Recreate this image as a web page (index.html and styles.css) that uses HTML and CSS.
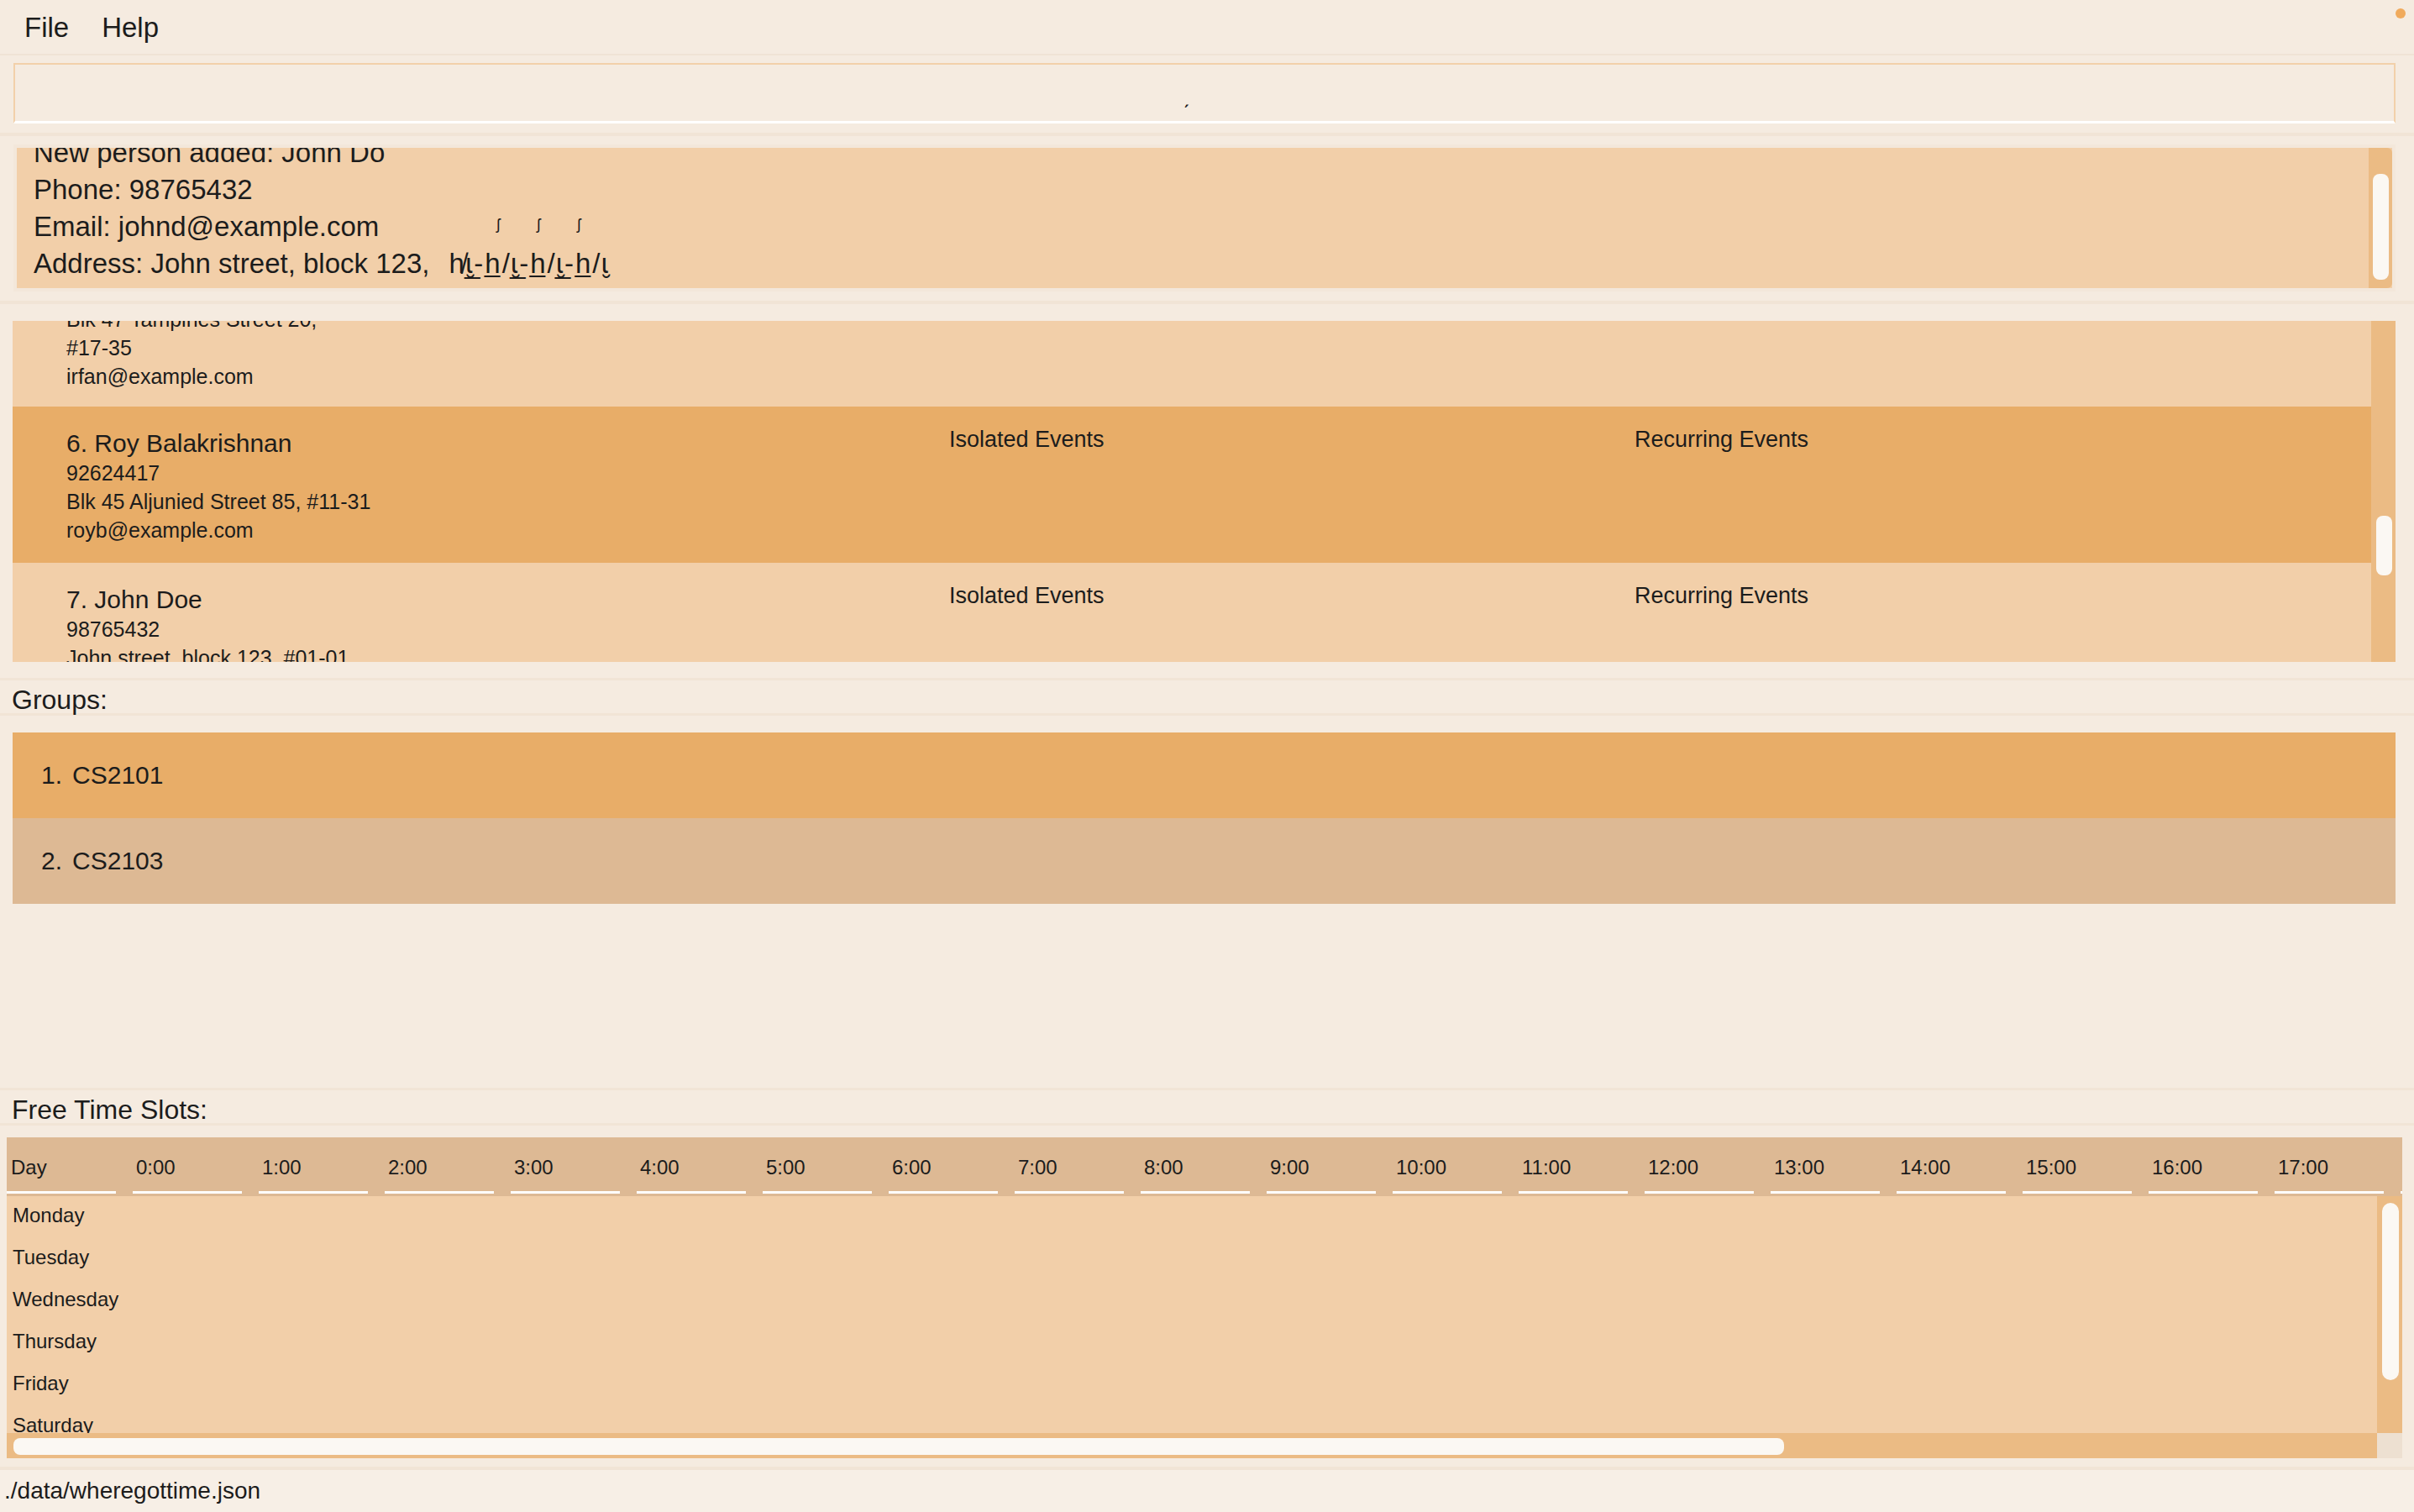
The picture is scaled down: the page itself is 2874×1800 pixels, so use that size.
FILE: index.html
```html
<!DOCTYPE html>
<html lang="en">
<head>
<meta charset="utf-8">
<title>WhereGotTime</title>
<link rel="stylesheet" href="styles.css">
</head>
<body>
<div class="app">
  <header class="menubar">
    <span class="menu-item">File</span>
    <span class="menu-item">Help</span>
    <span class="dot"></span>
  </header>

  <section class="command-pane">
    <div class="command-box"><span class="caret">ˏ</span></div>
  </section>

  <section class="result-pane">
    <div class="result-box">
      <div class="result-text">
        <div>New person added: John Do</div>
        <div>Phone: 98765432</div>
        <div>Email: johnd@example.com<span class="mark m1">ʃ</span><span class="mark m2">ʃ</span><span class="mark m3">ʃ</span></div>
        <div>Address: John street, block 123, <span class="garble">h̸ɩ̮̲-h̲/ɩ̮̲-h̲/ɩ̮̲-h̲/ɩ̮</span></div>
      </div>
      <div class="vscroll result-scroll"><div class="thumb"></div></div>
    </div>
  </section>

  <section class="person-pane">
    <div class="person-list">
      <div class="person-rows">
        <div class="person-scroll">
          <div class="person-row wrapped">
            <div class="person-info">
              <div class="name">5. Irfan Ibrahim</div>
              <div class="detail">92492021</div>
              <div class="detail">Blk 47 Tampines Street 20, <span class="unit">#17-35</span></div>
              <div class="detail">irfan@example.com</div>
            </div>
            <div class="events">Isolated Events</div>
            <div class="events">Recurring Events</div>
          </div>
          <div class="person-row selected">
            <div class="person-info">
              <div class="name">6. Roy Balakrishnan</div>
              <div class="detail">92624417</div>
              <div class="detail">Blk 45 Aljunied Street 85, <span class="unit">#11-31</span></div>
              <div class="detail">royb@example.com</div>
            </div>
            <div class="events">Isolated Events</div>
            <div class="events">Recurring Events</div>
          </div>
          <div class="person-row">
            <div class="person-info">
              <div class="name">7. John Doe</div>
              <div class="detail">98765432</div>
              <div class="detail">John street, block 123, <span class="unit">#01-01</span></div>
              <div class="detail">johnd@example.com</div>
            </div>
            <div class="events">Isolated Events</div>
            <div class="events">Recurring Events</div>
          </div>
        </div>
      </div>
      <div class="vscroll list-scroll"><div class="thumb"></div></div>
    </div>
  </section>

  <div class="label-bar">Groups:</div>

  <section class="group-pane">
    <div class="group-row selected"><span class="idx">1.</span><span>CS2101</span></div>
    <div class="group-row alt"><span class="idx">2.</span><span>CS2103</span></div>
  </section>

  <div class="label-bar">Free Time Slots:</div>

  <section class="table-pane">
    <div class="table">
      <div class="thead">
        <div class="th th-day">Day</div>
        <div class="th">0:00</div>
        <div class="th">1:00</div>
        <div class="th">2:00</div>
        <div class="th">3:00</div>
        <div class="th">4:00</div>
        <div class="th">5:00</div>
        <div class="th">6:00</div>
        <div class="th">7:00</div>
        <div class="th">8:00</div>
        <div class="th">9:00</div>
        <div class="th">10:00</div>
        <div class="th">11:00</div>
        <div class="th">12:00</div>
        <div class="th">13:00</div>
        <div class="th">14:00</div>
        <div class="th">15:00</div>
        <div class="th">16:00</div>
        <div class="th">17:00</div>
        <div class="th">18:00</div>
        <div class="th">19:00</div>
        <div class="th">20:00</div>
        <div class="th">21:00</div>
        <div class="th">22:00</div>
        <div class="th">23:00</div>
      </div>
      <div class="tbody-wrap">
        <div class="tbody">
          <div class="tr">Monday</div>
          <div class="tr">Tuesday</div>
          <div class="tr">Wednesday</div>
          <div class="tr">Thursday</div>
          <div class="tr">Friday</div>
          <div class="tr">Saturday</div>
          <div class="tr">Sunday</div>
        </div>
        <div class="vscroll table-scroll"><div class="thumb"></div></div>
      </div>
      <div class="hscroll-row">
        <div class="hscroll"><div class="hthumb"></div></div>
        <div class="corner"></div>
      </div>
    </div>
  </section>

  <footer class="status">./data/wheregottime.json</footer>
</div>
</body>
</html>
```

FILE: styles.css
```css
* { box-sizing: border-box; }

body {
  margin: 0;
  background: #f5ebe0;
  font-family: "Liberation Sans", Arial, sans-serif;
  color: #1c1c1c;
}

.app {
  width: 2874px;
  height: 1800px;
  display: flex;
  flex-direction: column;
  overflow: hidden;
}

/* menu */
.menubar {
  height: 66px;
  flex-shrink: 0;
  border-bottom: 2px solid #f0e3d5;
  display: flex;
  gap: 39px;
  padding: 2px 0 0 29px;
  font-size: 33px;
  line-height: 62px;
}
.dot {
  width: 12px;
  height: 12px;
  border-radius: 50%;
  background: #f0aa5c;
  margin: 8px 10px 0 auto;
}

/* command box */
.command-pane {
  height: 96px;
  flex-shrink: 0;
  padding: 9px 22px 0 16px;
  border-bottom: 4px solid #f1e4d6;
}
.command-box {
  height: 72px;
  border: 2px solid #f2d0aa;
  border-bottom: 3px solid #ffffff;
  display: flex;
  justify-content: center;
  align-items: flex-end;
  padding: 0 44px 15px 0;
  font-size: 26px;
  line-height: 30px;
}

/* result display */
.result-pane {
  height: 200px;
  flex-shrink: 0;
  padding: 10px 22px 0 16px;
  border-bottom: 4px solid #f1e4d6;
}
.result-box {
  height: 175px;
  border: 4px solid #f3e7da;
  background: #f2cfa9;
  display: flex;
  overflow: hidden;
}
.result-text {
  flex: 1;
  padding-left: 20px;
  margin-top: -16px;
  font-size: 33px;
  line-height: 44px;
  white-space: nowrap;
}
.mark {
  display: inline-block;
  font-size: 18px;
  line-height: 18px;
  vertical-align: 8px;
}
.m1 { margin-left: 140px; }
.m2 { margin-left: 44px; }
.m3 { margin-left: 44px; }
.garble {
  margin-left: 14px;
  letter-spacing: 2px;
}

.vscroll {
  background: #ebbb84;
  flex-shrink: 0;
}
.vscroll .thumb {
  background: #fbf8f3;
  border-radius: 8px;
}
.result-scroll {
  width: 28px;
  border-radius: 0 6px 6px 0;
  padding: 31px 4px 0 5px;
}
.result-scroll .thumb { height: 126px; }

/* person list */
.person-pane {
  height: 445px;
  flex-shrink: 0;
  padding: 20px 22px 0 15px;
}
.person-list {
  height: 406px;
  display: flex;
  background: #f2cfa9;
  overflow: hidden;
}
.person-rows {
  flex: 1;
  overflow: hidden;
}
.person-scroll { margin-top: -115px; }
.person-row {
  display: grid;
  grid-template-columns: 1051px 816px 1fr;
  padding: 26px 0 22px 64px;
}
.person-row.wrapped { padding-bottom: 19px; }
.person-row.selected { background: #e8ad68; }
.name {
  font-size: 30px;
  line-height: 36px;
}
.detail {
  font-size: 25px;
  line-height: 34px;
  max-width: 375px;
}
.unit { white-space: nowrap; }
.events {
  font-size: 27px;
  line-height: 32px;
  margin-top: -3px;
}
.list-scroll {
  width: 29px;
  padding: 232px 4px 0 6px;
}
.list-scroll .thumb { height: 71px; }

/* labels */
.label-bar {
  height: 45px;
  flex-shrink: 0;
  border-top: 3px solid #f1e4d6;
  border-bottom: 3px solid #f1e4d6;
  padding: 5px 0 0 14px;
  font-size: 32px;
  line-height: 36px;
}

/* groups */
.group-pane {
  flex: 1;
  padding: 20px 22px 0 15px;
}
.group-row {
  height: 102px;
  display: flex;
  align-items: center;
  padding-left: 34px;
  font-size: 30px;
}
.group-row .idx { margin-right: 12px; }
.group-row.selected { background: #e8ad68; }
.group-row.alt { background: #ddb994; }

/* free time table */
.table-pane {
  height: 410px;
  flex-shrink: 0;
  padding: 14px 14px 0 8px;
  border-bottom: 4px solid #f1e4d6;
}
.table {
  height: 382px;
  display: flex;
  flex-direction: column;
  overflow: hidden;
}
.thead {
  height: 70px;
  flex-shrink: 0;
  background: #ddb994;
  display: flex;
}
.th {
  flex: 0 0 130px;
  margin-right: 20px;
  height: 67px;
  border-bottom: 3px solid #ffffff;
  padding: 22px 0 0 4px;
  font-size: 24px;
  line-height: 28px;
  white-space: nowrap;
}
.th-day { padding-left: 5px; }
.tbody-wrap {
  height: 282px;
  flex-shrink: 0;
  display: flex;
}
.tbody {
  flex: 1;
  background: #f2cfa9;
  overflow: hidden;
}
.tr {
  height: 50px;
  padding-left: 7px;
  font-size: 24px;
  line-height: 46px;
}
.table-scroll {
  width: 30px;
  padding: 8px 4px 0 6px;
}
.table-scroll .thumb {
  height: 211px;
  border-radius: 10px;
}
.hscroll-row {
  height: 30px;
  flex-shrink: 0;
  display: flex;
}
.hscroll {
  flex: 1;
  background: #ebbb84;
  padding: 6px 0 0 8px;
}
.hthumb {
  width: 2108px;
  height: 20px;
  background: #fbf8f3;
  border-radius: 8px;
}
.corner {
  width: 30px;
  background: #ede0d1;
}

/* status */
.status {
  height: 50px;
  flex-shrink: 0;
  padding-left: 5px;
  font-size: 28px;
  line-height: 50px;
  background: #f7efe6;
}
```
